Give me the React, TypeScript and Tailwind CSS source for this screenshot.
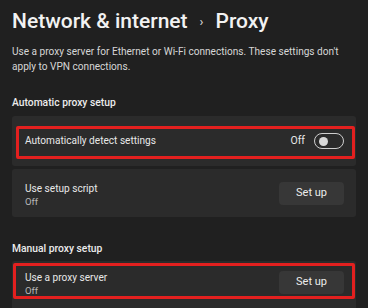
export default function App() {
  return (
    <div
      className="w-[368px] h-[308px] overflow-hidden bg-[#202020] text-white px-3"
      style={{ fontFamily: 'Roboto, "Open Sans", sans-serif' }}
    >
      {/* Header */}
      <div className="flex items-center pt-[5px] h-[38px] text-[21px] font-medium text-[#f2f2f2]">
        <span>Network &amp; internet</span>
        <span className="mx-[12px] text-[13px] text-[#cfcfcf]">›</span>
        <span>Proxy</span>
      </div>

      <p className="mt-[7px] text-[10.1px] leading-[14.5px] text-[#d6d6d6]">
        Use a proxy server for Ethernet or Wi-Fi connections. These settings don't apply to VPN connections.
      </p>

      <p className="mt-[21px] text-[10.3px] font-medium text-[#ececec] leading-[16px]">Automatic proxy setup</p>

      {/* Automatic card */}
      <div className="mt-[5px] relative h-[50px] bg-[#2b2b2b] rounded-[3px] flex items-center pl-[13px] pr-[12px]">
        <span className="flex-1 text-[10.1px] text-[#e8e8e8]">Automatically detect settings</span>
        <span className="text-[10.5px] text-[#e8e8e8] mr-[9px]">Off</span>
        <div className="w-[30px] h-[16px] rounded-full border border-[#cfcfcf] flex items-center pl-[4px]">
          <div className="w-[9px] h-[9px] rounded-full bg-[#d8d8d8]" />
        </div>
        <div className="absolute left-[4px] right-[1px] top-[10px] bottom-[7px] border-[3px] border-[#e3201f] rounded-[2px]" />
      </div>

      <div className="mt-[3px] h-[48px] bg-[#2b2b2b] rounded-[3px] flex items-center pl-[13px] pr-[12px]">
        <div className="flex-1 flex flex-col pt-[3px]">
          <span className="text-[10.1px] leading-[14px] text-[#e8e8e8]">Use setup script</span>
          <span className="text-[9.5px] leading-[12px] text-[#b8b8b8]">Off</span>
        </div>
        <button className="w-[65px] h-[23px] rounded-[4px] bg-[#373737] text-[11px] text-[#ececec]">Set up</button>
      </div>

      <p className="mt-[24px] text-[10.3px] font-medium text-[#ececec] leading-[16px]">Manual proxy setup</p>

      {/* Manual card */}
      <div className="mt-[4px] relative h-[50px] bg-[#2b2b2b] rounded-[3px] flex items-start pt-[10px] pl-[13px] pr-[12px]">
        <div className="flex-1 flex flex-col">
          <span className="text-[10.1px] leading-[14px] text-[#e8e8e8]">Use a proxy server</span>
          <span className="text-[9.5px] leading-[12px] text-[#b8b8b8]">Off</span>
        </div>
        <button className="w-[65px] h-[23px] rounded-[4px] bg-[#373737] text-[11px] text-[#ececec]">Set up</button>
        <div className="absolute left-[1px] right-[1px] top-[2px] h-[36px] border-[3px] border-[#e3201f] rounded-[2px]" />
      </div>
    </div>
  );
}
